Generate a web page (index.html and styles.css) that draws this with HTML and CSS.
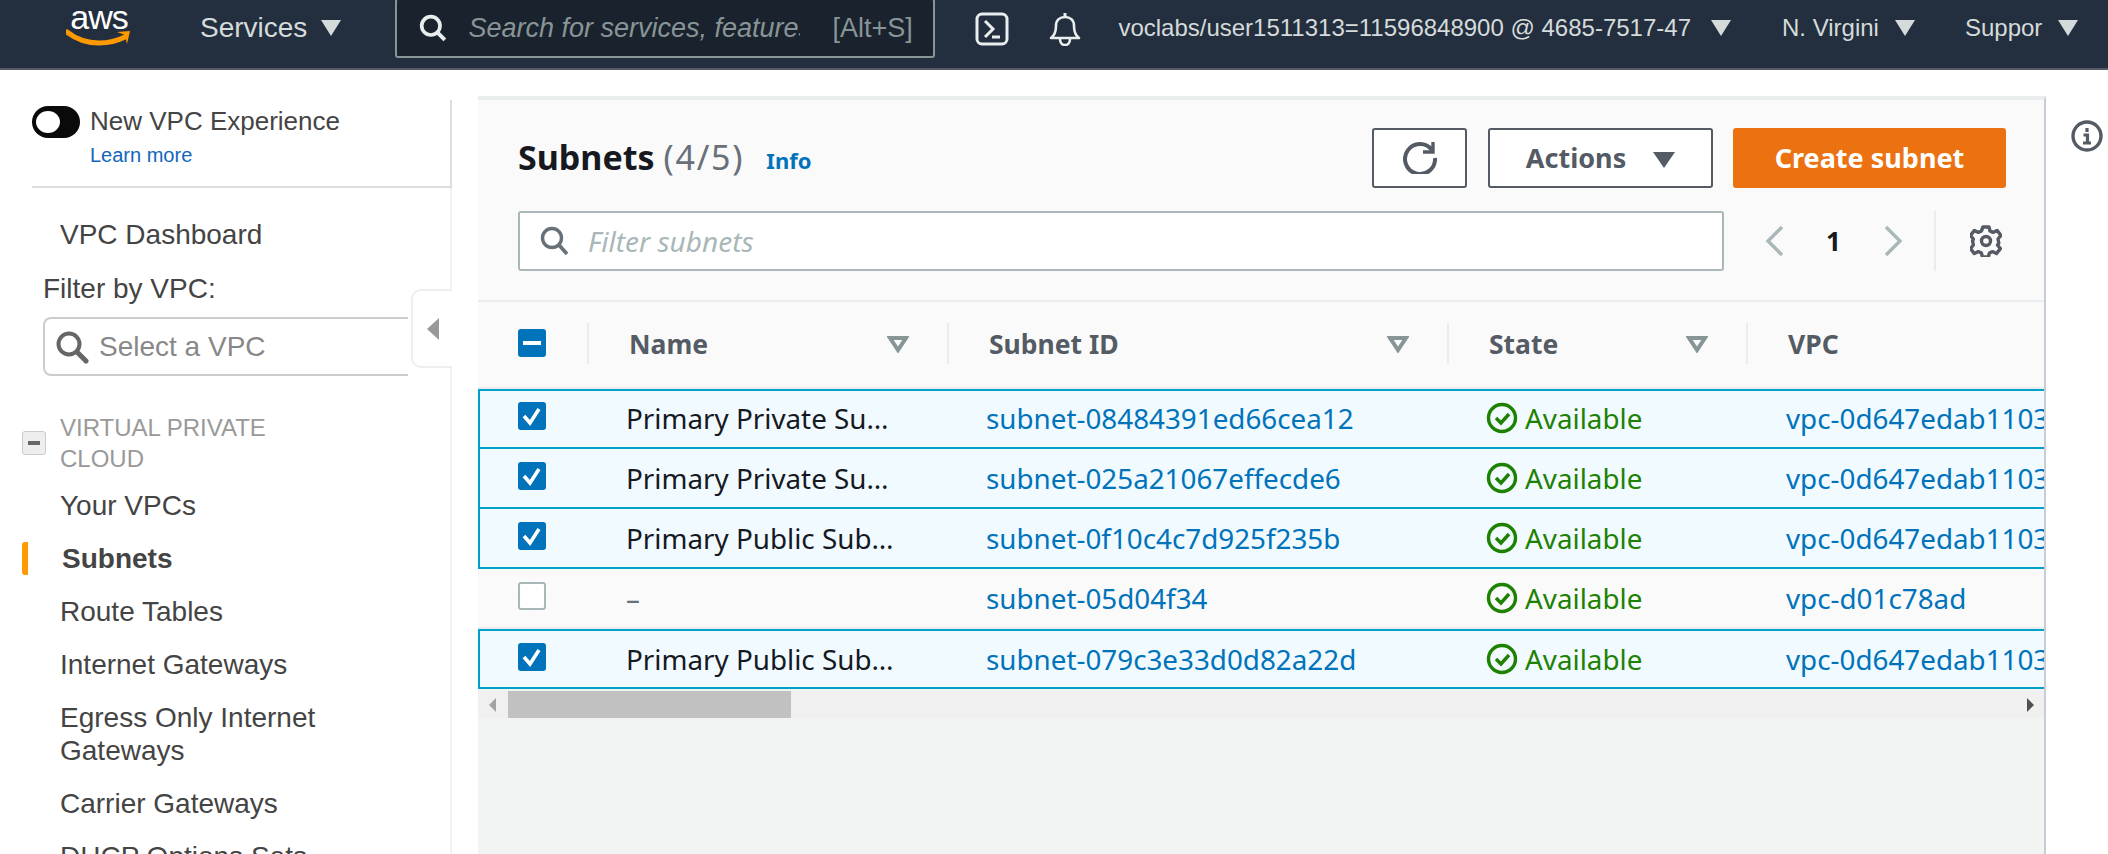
FILE: index.html
```html
<!DOCTYPE html>
<html lang="en">
<head>
  <meta charset="UTF-8">
  <title>Subnets | VPC Management Console</title>
  <link rel="stylesheet" href="styles.css">
</head>
<body>
  <header class="topbar">
    <div class="logo">
      <span class="logo-text">aws</span>
      <svg class="logo-smile" viewBox="0 0 66 20"><path d="M1 3c9 7 20 11 32 11 9 0 18-2 26-6" fill="none" stroke="#f90" stroke-width="5" stroke-linecap="round"/><path d="M51 3l13-1-3 13-2-9z" fill="#f90"/></svg>
    </div>
    <span class="nav-item nav-services">Services</span>
    <span class="caret caret-services"></span>
    <div class="search">
      <svg class="search-icon" viewBox="0 0 26 26"><circle cx="11" cy="11" r="8.5" fill="none" stroke="#eaeded" stroke-width="3.4"/><path d="M17 17l7 7" stroke="#eaeded" stroke-width="3.6"/></svg>
      <span class="search-text">Search for services, features</span>
      <span class="search-key">[Alt+S]</span>
    </div>
    <svg class="shell-icon" viewBox="0 0 34 34"><rect x="2" y="2" width="30" height="30" rx="5" fill="none" stroke="#eaeded" stroke-width="3"/><path d="M10 9l8 8-8 8" fill="none" stroke="#eaeded" stroke-width="3"/><path d="M17 25h8" stroke="#eaeded" stroke-width="3"/></svg>
    <svg class="bell-icon" viewBox="0 0 32 34"><path d="M2 26c4-3 5-6 5-12 0-6 4-9 9-9s9 3 9 9c0 6 1 9 5 12z" fill="none" stroke="#eaeded" stroke-width="2.6" stroke-linejoin="round"/><path d="M16 1v4" stroke="#eaeded" stroke-width="3"/><path d="M11 27c0 8 10 8 10 0" fill="none" stroke="#eaeded" stroke-width="2.6"/></svg>
    <span class="nav-item nav-account">voclabs/user1511313=11596848900 @ 4685-7517-47</span>
    <span class="caret caret-account"></span>
    <span class="nav-item nav-region">N. Virgini</span>
    <span class="caret caret-region"></span>
    <span class="nav-item nav-support">Suppor</span>
    <span class="caret"></span>
  </header>

  <div class="page">
    <aside class="sidebar">
      <div class="experience">
        <div class="toggle-row">
          <span class="toggle"><span class="toggle-knob"></span></span>
          <span class="toggle-label">New VPC Experience</span>
        </div>
        <a class="learn-more">Learn more</a>
      </div>
      <a class="nav-link nav-dashboard">VPC Dashboard</a>
      <div class="filter-label">Filter by VPC:</div>
      <div class="vpc-select">
        <svg class="vpc-select-icon" viewBox="0 0 34 34"><circle cx="14" cy="14" r="10.5" fill="#fff" stroke="#666" stroke-width="4"/><path d="M22 22l9 9" stroke="#666" stroke-width="5" stroke-linecap="round"/></svg>
        <span>Select a VPC</span>
      </div>
      <div class="collapse-tab"><span class="collapse-arrow"></span></div>
      <div class="section">
        <span class="section-toggle"><span class="section-minus"></span></span>
        <span class="section-title">VIRTUAL PRIVATE CLOUD</span>
      </div>
      <a class="nav-link nav-first">Your VPCs</a>
      <a class="nav-link nav-active">Subnets</a>
      <a class="nav-link">Route Tables</a>
      <a class="nav-link">Internet Gateways</a>
      <a class="nav-link">Egress Only Internet Gateways</a>
      <a class="nav-link">Carrier Gateways</a>
      <a class="nav-link">DHCP Options Sets</a>
    </aside>

    <main class="content">
      <section class="panel">
        <div class="toolbar">
          <div class="title-row">
            <h1 class="title">Subnets <span class="title-count">(4/5)</span></h1>
            <a class="info-link">Info</a>
            <button class="btn btn-refresh">
              <svg viewBox="0 0 34 34"><path d="M29 10A15 15 0 1 0 32 18" fill="none" stroke="#545b64" stroke-width="4"/><path d="M30 2v10H20" fill="none" stroke="#545b64" stroke-width="3.400"/></svg>
            </button>
            <button class="btn btn-actions">Actions <span class="caret-dark"></span></button>
            <button class="btn btn-primary">Create subnet</button>
          </div>
          <div class="filter-row">
            <div class="filter">
              <svg class="filter-icon" viewBox="0 0 30 30"><circle cx="12" cy="12" r="9.5" fill="none" stroke="#687078" stroke-width="3.4"/><path d="M19 19l8 9" stroke="#687078" stroke-width="3.6"/></svg>
              <span class="filter-text">Filter subnets</span>
            </div>
            <svg class="pager-arrow" viewBox="0 0 20 30"><path d="M17 1L3 15l14 14" fill="none" stroke="#aab7b8" stroke-width="3.4"/></svg>
            <span class="pager-num">1</span>
            <svg class="pager-arrow" viewBox="0 0 20 30"><path d="M3 1l14 14L3 29" fill="none" stroke="#aab7b8" stroke-width="3.4"/></svg>
            <span class="pager-divider"></span>
            <svg class="gear" viewBox="0 0 32 32"><path d="M13 2h6l1 4 3 1.400 4-2 4 5-3 3.600.400 2 .400 2-1 2-.400 0 3 3.600-4 5-4-2-3 1.400-1 4h-6l-1-4-3-1.400-4 2-4-5 3-3.600-.800-4 .800-2-3-3.600 4-5 4 2 3-1.400z" fill="none" stroke="#545b64" stroke-width="3.400" stroke-linejoin="round"/><circle cx="16" cy="16" r="4.500" fill="none" stroke="#545b64" stroke-width="3.400"/></svg>
          </div>
        </div>

        <div class="table">
          <div class="grid head">
            <div class="head-cell head-check"><span class="check check-mixed"><span class="mixed-bar"></span></span></div>
            <div class="head-cell"><span>Name</span><svg class="sort" viewBox="0 0 22 18"><path d="M3 3h16l-8 12z" fill="none" stroke="#879596" stroke-width="4"/></svg></div>
            <div class="head-cell"><span>Subnet ID</span><svg class="sort" viewBox="0 0 22 18"><path d="M3 3h16l-8 12z" fill="none" stroke="#879596" stroke-width="4"/></svg></div>
            <div class="head-cell"><span>State</span><svg class="sort" viewBox="0 0 22 18"><path d="M3 3h16l-8 12z" fill="none" stroke="#879596" stroke-width="4"/></svg></div>
            <div class="head-cell"><span>VPC</span></div>
          </div>

          <div class="grid row selected row-short">
            <div class="cell"><span class="check"><svg viewBox="0 0 28 28"><path d="M6 14l6 7 9-14" fill="none" stroke="#fff" stroke-width="3.600"/></svg></span></div>
            <div class="cell">Primary Private Su…</div>
            <div class="cell link">subnet-08484391ed66cea12</div>
            <div class="cell status"><svg viewBox="0 0 32 32"><circle cx="16" cy="16" r="13.500" fill="none" stroke="#1d8102" stroke-width="3.400"/><path d="M10 16l5 5 8-9" fill="none" stroke="#1d8102" stroke-width="3.400"/></svg>Available</div>
            <div class="cell link">vpc-0d647edab1103</div>
          </div>
          <div class="grid row selected">
            <div class="cell"><span class="check"><svg viewBox="0 0 28 28"><path d="M6 14l6 7 9-14" fill="none" stroke="#fff" stroke-width="3.600"/></svg></span></div>
            <div class="cell">Primary Private Su…</div>
            <div class="cell link">subnet-025a21067effecde6</div>
            <div class="cell status"><svg viewBox="0 0 32 32"><circle cx="16" cy="16" r="13.500" fill="none" stroke="#1d8102" stroke-width="3.400"/><path d="M10 16l5 5 8-9" fill="none" stroke="#1d8102" stroke-width="3.400"/></svg>Available</div>
            <div class="cell link">vpc-0d647edab1103</div>
          </div>
          <div class="grid row selected">
            <div class="cell"><span class="check"><svg viewBox="0 0 28 28"><path d="M6 14l6 7 9-14" fill="none" stroke="#fff" stroke-width="3.600"/></svg></span></div>
            <div class="cell">Primary Public Sub…</div>
            <div class="cell link">subnet-0f10c4c7d925f235b</div>
            <div class="cell status"><svg viewBox="0 0 32 32"><circle cx="16" cy="16" r="13.500" fill="none" stroke="#1d8102" stroke-width="3.400"/><path d="M10 16l5 5 8-9" fill="none" stroke="#1d8102" stroke-width="3.400"/></svg>Available</div>
            <div class="cell link">vpc-0d647edab1103</div>
          </div>
          <div class="grid row row-plain">
            <div class="cell"><span class="check check-empty"></span></div>
            <div class="cell cell-empty">–</div>
            <div class="cell link">subnet-05d04f34</div>
            <div class="cell status"><svg viewBox="0 0 32 32"><circle cx="16" cy="16" r="13.500" fill="none" stroke="#1d8102" stroke-width="3.400"/><path d="M10 16l5 5 8-9" fill="none" stroke="#1d8102" stroke-width="3.400"/></svg>Available</div>
            <div class="cell link">vpc-d01c78ad</div>
          </div>
          <div class="grid row selected row-last">
            <div class="cell"><span class="check"><svg viewBox="0 0 28 28"><path d="M6 14l6 7 9-14" fill="none" stroke="#fff" stroke-width="3.600"/></svg></span></div>
            <div class="cell">Primary Public Sub…</div>
            <div class="cell link">subnet-079c3e33d0d82a22d</div>
            <div class="cell status"><svg viewBox="0 0 32 32"><circle cx="16" cy="16" r="13.500" fill="none" stroke="#1d8102" stroke-width="3.400"/><path d="M10 16l5 5 8-9" fill="none" stroke="#1d8102" stroke-width="3.400"/></svg>Available</div>
            <div class="cell link">vpc-0d647edab1103</div>
          </div>
        </div>

        <div class="scrollbar">
          <span class="scroll-left"></span>
          <span class="scroll-thumb"></span>
          <span class="scroll-right"></span>
        </div>
      </section>
    </main>

    <div class="help">
      <svg class="help-icon" viewBox="0 0 32 32"><circle cx="16" cy="16" r="14" fill="none" stroke="#545b64" stroke-width="3.400"/><path d="M16 8v4M12.500 15h4v8M12 23h8" fill="none" stroke="#545b64" stroke-width="3.200"/></svg>
    </div>
  </div>
</body>
</html>
```

FILE: styles.css
```css
* {
  box-sizing: border-box;
}

html,
body {
  height: 854px;
  margin: 0;
  overflow: hidden;
}

body {
  font-family: "Liberation Sans", Arial, sans-serif;
  color: #444;
  background-color: #fff;
}

/* top bar */
.topbar {
  display: flex;
  align-items: center;
  height: 70px;
  padding-left: 66px;
  background-color: #232f3e;
  border-bottom: 2px solid #545b64;
  color: #d5dbdb;
  white-space: nowrap;
  overflow: hidden;
}

.logo {
  display: flex;
  flex-direction: column;
  align-items: center;
  width: 66px;
  margin-top: -16px;
  height: 48px;
}

.logo-text {
  font-size: 34px;
  line-height: 30px;
  letter-spacing: -1px;
  color: #fff;
}

.logo-smile {
  width: 66px;
  height: 20px;
  margin-top: -3px;
}

.nav-item {
  font-size: 24px;
  line-height: 30px;
  margin-top: -12px;
}

.nav-services {
  margin-left: 68px;
  font-size: 28px;
}

.caret {
  width: 0;
  height: 0;
  margin-top: -12px;
  margin-left: 16px;
  border-left: 10px solid transparent;
  border-right: 10px solid transparent;
  border-top: 16px solid #d5dbdb;
}

.caret-services {
  margin-left: 14px;
}

.search {
  display: flex;
  align-items: center;
  width: 540px;
  height: 60px;
  margin-left: 54px;
  margin-top: -12px;
  padding-left: 22px;
  background-color: #1a222d;
  border: 2px solid #879596;
  border-radius: 3px;
  font-size: 27px;
}

.search-icon {
  width: 28px;
  height: 28px;
  flex: none;
}

.search-text {
  width: 332px;
  margin-left: 21px;
  overflow: hidden;
  font-style: italic;
  color: #879596;
}

.search-key {
  margin-left: 32px;
  color: #879596;
}

.shell-icon {
  width: 34px;
  height: 34px;
  margin-left: 40px;
  margin-top: -10px;
}

.bell-icon {
  width: 32px;
  height: 34px;
  margin-left: 40px;
  margin-top: -10px;
}

.nav-account {
  margin-left: 37px;
}

.caret-account {
  margin-left: 20px;
}

.nav-region {
  margin-left: 51px;
}

.nav-support {
  margin-left: 50px;
}

/* page */
.page {
  display: flex;
  height: 784px;
}

.sidebar {
  position: relative;
  flex: none;
  width: 452px;
  margin-top: 30px;
  box-shadow: inset -2px 0 0 #f2f2f2;
  overflow: hidden;
  font-size: 28px;
}

.experience {
  height: 88px;
  margin-left: 32px;
  padding-top: 6px;
  border-bottom: 2px solid #ddd;
  border-right: 2px solid #ddd;
}

.toggle-row {
  display: flex;
  align-items: center;
}

.toggle {
  display: block;
  width: 48px;
  height: 32px;
  padding: 5px 0 0 4px;
  background-color: #0a0a0a;
  border-radius: 16px;
}

.toggle-knob {
  display: block;
  width: 24px;
  height: 22px;
  background-color: #fff;
  border-radius: 50%;
}

.toggle-label {
  margin-left: 10px;
  font-size: 26px;
  margin-top: -2px;
}

.learn-more {
  display: block;
  margin: 6px 0 0 58px;
  font-size: 20px;
  color: #1166bb;
}

.nav-link {
  display: block;
  margin-left: 60px;
  width: 330px;
  line-height: 33px;
  margin-top: 20px;
  color: #444;
}

.nav-dashboard {
  margin-top: 30px;
}

.filter-label {
  margin: 21px 0 0 43px;
  line-height: 33px;
}

.vpc-select {
  display: flex;
  align-items: center;
  width: 365px;
  height: 59px;
  margin: 12px 0 0 43px;
  padding-left: 10px;
  border: 2px solid #ccc;
  border-right: 0;
  border-radius: 8px 0 0 8px;
  color: #888;
}

.vpc-select-icon {
  width: 34px;
  height: 34px;
  margin-right: 10px;
}

.collapse-tab {
  position: absolute;
  top: 189px;
  right: 0;
  display: flex;
  align-items: center;
  padding-left: 14px;
  width: 41px;
  height: 79px;
  background-color: #fff;
  border: 2px solid #eee;
  border-right: 0;
  border-radius: 10px 0 0 10px;
}

.collapse-arrow {
  width: 0;
  height: 0;
  margin-top: 1px;
  border-top: 11px solid transparent;
  border-bottom: 11px solid transparent;
  border-right: 12px solid #999;
}

.section {
  display: flex;
  align-items: center;
  margin: 36px 0 0 22px;
}

.section-toggle {
  display: flex;
  align-items: center;
  justify-content: center;
  flex: none;
  width: 24px;
  height: 24px;
  background-color: #eee;
  border: 1px solid #ccc;
  border-radius: 3px;
}

.section-minus {
  width: 12px;
  height: 4px;
  background-color: #666;
}

.section-title {
  width: 230px;
  margin-left: 14px;
  font-size: 24px;
  line-height: 31px;
  color: #999;
}

.nav-first {
  margin-top: 15px;
}

.nav-active {
  position: relative;
  margin-left: 62px;
  font-weight: bold;
}

.nav-active::before {
  content: "";
  position: absolute;
  left: -40px;
  top: 0;
  width: 6px;
  height: 33px;
  background-color: #f90;
  border-radius: 3px 0 0 3px;
}

/* main panel */
.content {
  flex: none;
  width: 1568px;
  margin: 26px 0 0 26px;
  background-color: #f2f3f3;
  border-top: 4px solid #eaeded;
  border-right: 2px solid #c6cdd4;
  font-family: "Noto Sans", sans-serif;
  overflow: hidden;
}

.panel {
  overflow: hidden;
}

.toolbar {
  height: 202px;
  padding: 28px 38px 0 40px;
  background-color: #fafafa;
  border-bottom: 2px solid #eaeded;
}

.title-row {
  display: flex;
  align-items: center;
  height: 60px;
}

.title {
  margin: 0 0 2px;
  font-size: 34px;
  font-weight: 700;
  color: #16191f;
}

.title-count {
  font-weight: 400;
  letter-spacing: 1.8px;
  color: #687078;
}

.info-link {
  margin: 4px auto 0 22px;
  font-size: 22px;
  font-weight: 700;
  color: #0073bb;
}

.btn {
  height: 60px;
  margin: 0;
  padding: 0 0 2px;
  background-color: #fff;
  border: 2px solid #545b64;
  border-radius: 3px;
  font-family: "Noto Sans", sans-serif;
  font-size: 27px;
  font-weight: 700;
  color: #545b64;
}

.btn-refresh {
  width: 95px;
}

.btn-refresh svg {
  display: block;
  width: 34px;
  height: 34px;
  margin: 0 auto;
}

.btn-actions {
  width: 225px;
  margin-left: 21px;
}

.caret-dark {
  display: inline-block;
  margin-left: 20px;
  border-left: 11px solid transparent;
  border-right: 11px solid transparent;
  border-top: 16px solid #545b64;
}

.btn-primary {
  width: 273px;
  margin-left: 20px;
  background-color: #ec7211;
  border-color: #ec7211;
  color: #fff;
}

.filter-row {
  display: flex;
  align-items: center;
  height: 60px;
  margin-top: 23px;
}

.filter {
  display: flex;
  align-items: center;
  width: 1206px;
  height: 60px;
  padding-left: 20px;
  background-color: #fff;
  border: 2px solid #aab7b8;
  border-radius: 3px;
}

.filter-icon {
  width: 30px;
  height: 30px;
}

.filter-text {
  margin-left: 18px;
  font-size: 28px;
  font-style: italic;
  color: #aab7b8;
}

.pager-arrow {
  width: 20px;
  height: 30px;
  margin-left: 41px;
}

.pager-num {
  width: 12px;
  margin-left: 41px;
  font-size: 26px;
  font-weight: 700;
  color: #16191f;
}

.pager-arrow + .pager-num + .pager-arrow {
  margin-left: 45px;
}

.pager-divider {
  width: 2px;
  height: 60px;
  margin-left: 31px;
  background-color: #eaeded;
}

.gear {
  width: 32px;
  height: 32px;
  margin-left: 34px;
}

/* table */
.table {
  overflow: hidden;
  background-color: #fafafa;
}

.grid {
  display: grid;
  grid-template-columns: 109px 360px 500px 299px 500px;
  width: 1768px;
  font-size: 27.8px;
}

.head {
  height: 87px;
  padding-top: 21px;
  border-bottom: 2px solid #eaeded;
  font-size: 26.5px;
}

.head-cell {
  display: flex;
  align-items: center;
  justify-content: space-between;
  height: 41px;
  padding: 0 38px 0 40px;
  border-left: 2px solid #eaeded;
  font-weight: 700;
  color: #545b64;
}

.head-check {
  padding: 0 0 0 40px;
  border-left: 0;
}

.sort {
  width: 22px;
  height: 18px;
}

.row {
  align-items: center;
  height: 60px;
  border-top: 2px solid transparent;
  color: #16191f;
}

.row-short {
  height: 58px;
  padding-bottom: 2px;
}

.row-plain {
  height: 62px;
  background-color: #fafafa;
  border-bottom: 2px solid #eaeded;
}

.row-last {
  height: 60px;
  border-bottom: 2px solid #00a1c9;
}

.selected {
  background-color: #f1faff;
  border-top-color: #00a1c9;
  box-shadow: inset 2px 0 0 #00a1c9;
}

.selected + .row-plain {
  border-top-color: #00a1c9;
}

.cell {
  display: flex;
  align-items: center;
  padding-left: 39px;
  white-space: nowrap;
}

.cell:first-child {
  padding-left: 40px;
}

.cell:last-child {
  padding-left: 40px;
}

.cell-empty {
  color: #687078;
}

.link {
  color: #0073bb;
}

.status {
  color: #1d8102;
}

.status svg {
  flex: none;
  width: 32px;
  height: 32px;
  margin-right: 7px;
}

.check {
  display: block;
  width: 28px;
  height: 28px;
  margin-bottom: 4px;
  background-color: #0073bb;
  border-radius: 3px;
}

.check svg {
  display: block;
}

.check-mixed {
  display: flex;
  align-items: center;
  justify-content: center;
  margin: 0 0 2px;
}

.mixed-bar {
  width: 18px;
  height: 4px;
  background-color: #fff;
}

.check-empty {
  background-color: #fff;
  border: 2px solid #aab7b8;
}

.scrollbar {
  display: flex;
  align-items: center;
  height: 27px;
  margin-top: 2px;
  background-color: #f0f0f0;
}

.scroll-left {
  width: 0;
  height: 0;
  margin-left: 11px;
  border-top: 7px solid transparent;
  border-bottom: 7px solid transparent;
  border-right: 7px solid #a3a3a3;
}

.scroll-thumb {
  width: 283px;
  height: 27px;
  margin-left: 12px;
  background-color: #c1c1c1;
}

.scroll-right {
  width: 0;
  height: 0;
  margin-left: auto;
  margin-right: 10px;
  border-top: 7px solid transparent;
  border-bottom: 7px solid transparent;
  border-left: 7px solid #505050;
}

.help {
  flex: 1;
  padding: 50px 0 0 25px;
}

.help-icon {
  display: block;
  width: 32px;
  height: 32px;
}
```
